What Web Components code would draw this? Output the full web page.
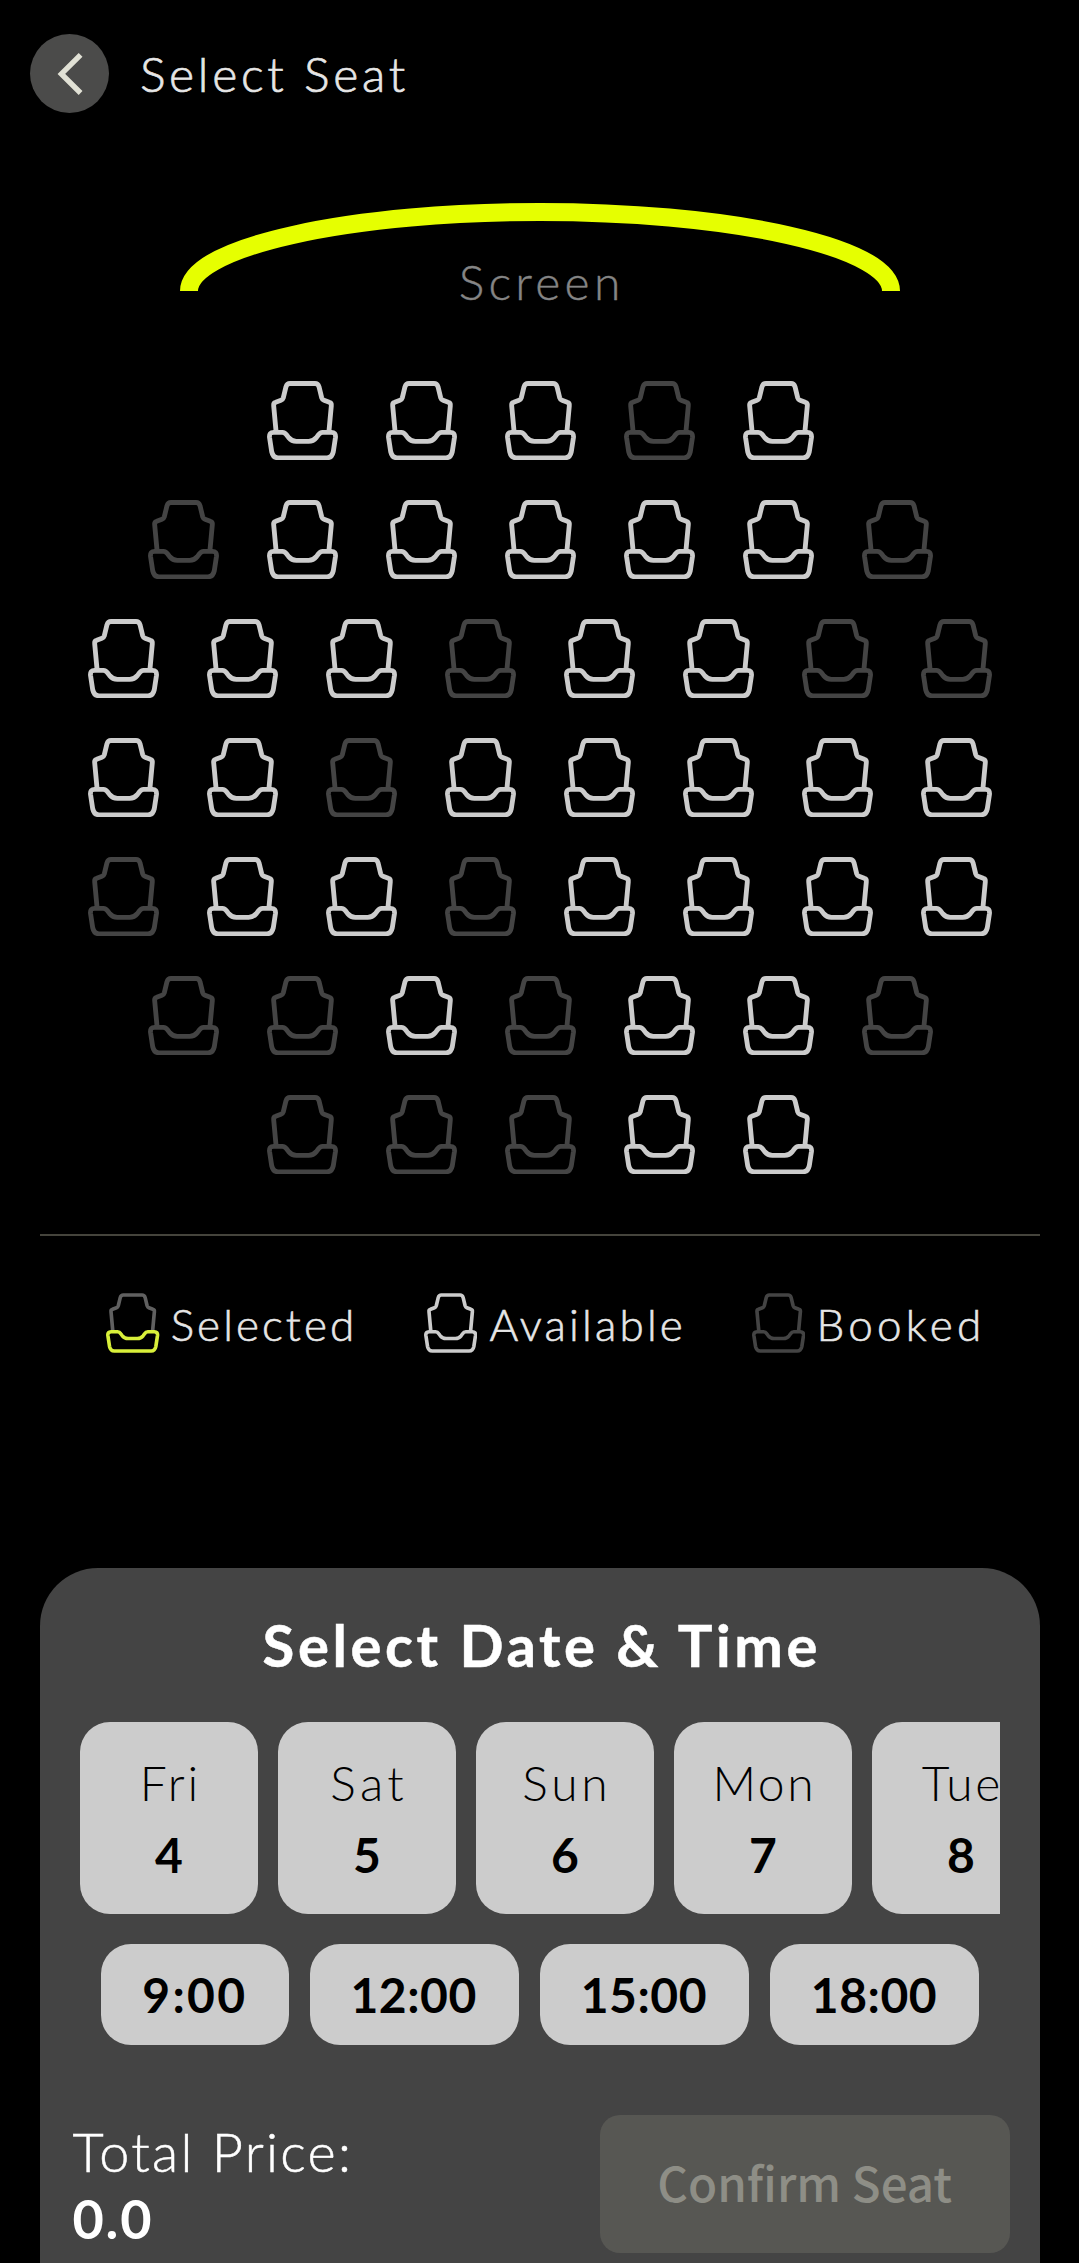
<!DOCTYPE html>
<html lang="en">
<head>
<meta charset="utf-8">
<title>Select Seat</title>
<style>
  html, body { margin: 0; background: #000; }
  body { font-family: Lato, "Open Sans", sans-serif; color: #e6e6e6; }
</style>
</head>
<body>
<seat-screen></seat-screen>

<script>
const define = (name, render) => customElements.define(name, class extends HTMLElement {
  connectedCallback() {
    if (!this.shadowRoot) this.attachShadow({ mode: 'open' }).innerHTML = render(this);
  }
});
const attr = (el, name, fallback = '') => el.getAttribute(name) ?? fallback;

/* Tracked text: the trailing letter gap is cancelled so that it centres on its ink. */
define('tracked-text', el => `
  <style>
    :host { display: block; white-space: nowrap; }
    span { display: block; letter-spacing: ${attr(el, 'track', 0)}px; margin-right: ${-attr(el, 'track', 0)}px; transform: translateY(var(--text-shift, 1px)); }
  </style><span><slot></slot></span>`);

define('back-button', () => `
  <style>
    :host { display: block; width: 79.4px; height: 79.4px; border-radius: 50%; background: #4b4b4a; }
    svg { display: block; width: 100%; height: 100%; }
  </style>
  <svg viewBox="0 0 79.4 79.4"><path d="M50.6 20.8 L31.4 39.9 L50.6 59" fill="none" stroke="#e1e1d5" stroke-width="5.4"/></svg>`);

define('screen-header', () => `
  <style>
    :host { display: flex; align-items: center; gap: 30.6px; height: 79.4px; padding: 33.8px 30px 0; font-weight: 300; font-size: 48px; line-height: 60px; }
    tracked-text { -webkit-text-stroke: .7px currentColor; }
  </style>
  <back-button></back-button><tracked-text track="3.7">Select Seat</tracked-text>`);

define('curved-screen', () => `
  <style>
    :host { display: grid; justify-content: center; height: 177.5px; margin-top: 90.3px; }
    svg, tracked-text { grid-area: 1 / 1; }
    svg { width: 720px; height: 88px; display: block; }
    tracked-text { justify-self: center; padding-top: 48px; font-weight: 300; font-size: 48px; line-height: 60px; color: #858585; -webkit-text-stroke: .4px currentColor; }
  </style>
  <svg viewBox="0 0 720 88"><path d="M9 88 A351 79 0 0 1 711 88" fill="none" stroke="#e6ff00" stroke-width="18"/></svg>
  <tracked-text track="4.3">Screen</tracked-text>`);

/* One seat: backrest outline with the cushion outline over its lower end. */
const SEAT_COLORS = { available: ['#ccc', '#ccc'], booked: ['#444', '#444'], selected: ['#606060', '#d9f03a'] };
define('cinema-seat', el => {
  const [back, cushion] = SEAT_COLORS[attr(el, 'state', 'available')];
  return `
  <style>
    :host { display: block; width: 71px; height: 79.3px; }
    svg { display: block; width: 100%; height: 100%; }
  </style>
  <svg viewBox="0 0 213 238" fill="none" stroke-width="14.5" stroke-linejoin="round" stroke-linecap="round">
    <path stroke="${back}" d="M27 150 L20 74 Q19 66 26 64 L42 58 Q47 56 49 50 L57 17 Q60 7.5 69 7.5 H144 Q153 7.5 156 17 L164 50 Q166 56 171 58 L187 64 Q194 66 193 74 L186 150"/>
    <path stroke="${cushion}" d="M20 154 H46 Q54 154 59 162 L65 170 Q74 181 88 181 H125 Q139 181 148 170 L154 162 Q159 154 167 154 H193 Q207 154 205.5 169 L199 212 Q195 230.5 180 230.5 H33 Q18 230.5 14 212 L7.5 169 Q6 154 20 154 Z"/>
  </svg>`;
});

define('seat-map', el => `
  <style>
    :host { display: flex; flex-direction: column; gap: 39.7px; padding-left: 1.5px; }
    .row { display: flex; justify-content: center; gap: 47.95px; }
  </style>
  ${attr(el, 'rows').split(' ').map(row => `<div class="row">${[...row].map(s =>
    `<cinema-seat state="${s === 'B' ? 'booked' : 'available'}"></cinema-seat>`).join('')}</div>`).join('')}`);

define('legend-item', el => `
  <style>
    :host { display: flex; align-items: center; gap: ${attr(el, 'gap', 11)}px; font-weight: 300; font-size: 44px; line-height: 60px; }
    cinema-seat { width: 53.4px; height: 60px; }
    tracked-text { -webkit-text-stroke: .6px currentColor; }
  </style>
  <cinema-seat state="${attr(el, 'state')}"></cinema-seat>
  <tracked-text track="${attr(el, 'track')}"><slot></slot></tracked-text>`);

define('seat-legend', () => `
  <style>
    :host { display: grid; grid-template-columns: 317.7px 328px auto; margin: 59.7px 39px 0 40px; border-top: 2px solid #45443c; padding: 57px 0 0 66.3px; height: 60px; --text-shift: .5px; }
  </style>
  <legend-item state="selected" track="3.1">Selected</legend-item>
  <legend-item state="available" gap="12" track="3.2">Available</legend-item>
  <legend-item state="booked" gap="11" track="4.3">Booked</legend-item>`);

define('date-card', el => `
  <style>
    :host { flex: none; display: flex; flex-direction: column; align-items: center; justify-content: center; width: 178px; height: 192px; border-radius: 30px; background: #ccc; color: #000; font-size: 48px; line-height: 71.4px; }
    .day { font-weight: 300; }
    .date { font-weight: 700; }
  </style>
  <tracked-text class="day" track="${attr(el, 'track')}">${attr(el, 'day')}</tracked-text>
  <tracked-text class="date">${attr(el, 'date')}</tracked-text>`);

define('time-chip', el => `
  <style>
    :host { display: flex; align-items: center; justify-content: center; box-sizing: border-box; width: ${attr(el, 'width', 209)}px; height: 101px; padding-right: 2px; border-radius: 30px; background: #ccc; color: #000; font-weight: 700; font-size: 48px; line-height: 60px; }
  </style>
  <tracked-text track="${attr(el, 'track', 0.53)}"><slot></slot></tracked-text>`);

define('confirm-button', () => `
  <style>
    :host { display: flex; align-items: center; justify-content: center; width: 410.5px; height: 138.5px; border-radius: 20px; background: #575753; color: #8e8e86; font-family: "Noto Sans CJK SC", "Noto Sans", sans-serif; font-weight: 500; font-size: 47.5px; line-height: 70px; --text-shift: -2px; }
  </style>
  <tracked-text track="0"><slot></slot></tracked-text>`);

define('booking-panel', () => `
  <style>
    :host { display: block; box-sizing: border-box; height: 695px; margin: 215px 39px 0 40px; border-radius: 58px 58px 0 0; background: #444; color: #fff; }
    .title { display: flex; justify-content: center; height: 154px; font-weight: 700; font-size: 58px; line-height: 151px; -webkit-text-stroke: .5px currentColor; }
    .dates { display: flex; gap: 20px; margin: 0 40px; overflow: hidden; }
    .times { display: flex; justify-content: center; gap: 21.2px; margin-top: 30px; }
    .footer { display: flex; justify-content: space-between; margin: 69.7px 30px 0 32.5px; }
    .price { padding-top: 2.8px; font-size: 54px; line-height: 67px; font-weight: 300; }
    .total { -webkit-text-stroke: .5px currentColor; }
    .amount { font-weight: 700; }
  </style>
  <div class="title"><tracked-text track="3.6">Select Date &amp; Time</tracked-text></div>
  <div class="dates">
    <date-card day="Fri" date="4" track="2.86"></date-card>
    <date-card day="Sat" date="5" track="4.3"></date-card>
    <date-card day="Sun" date="6" track="3.8"></date-card>
    <date-card day="Mon" date="7" track="2.6"></date-card>
    <date-card day="Tue" date="8" track="2.5"></date-card>
  </div>
  <div class="times">
    <time-chip width="188" track="2.32">9:00</time-chip>
    <time-chip>12:00</time-chip>
    <time-chip>15:00</time-chip>
    <time-chip>18:00</time-chip>
  </div>
  <div class="footer">
    <div class="price">
      <tracked-text class="total" track="2.3">Total Price:</tracked-text>
      <tracked-text class="amount" track="1.8">0.0</tracked-text>
    </div>
    <confirm-button>Confirm Seat</confirm-button>
  </div>`);

define('seat-screen', () => `
  <style>
    :host { display: flow-root; width: 1079px; height: 2263px; overflow: hidden; background: #000; }
  </style>
  <screen-header></screen-header>
  <curved-screen></curved-screen>
  <seat-map rows="AAABA BAAAAAB AAABAABB AABAAAAA BAABAAAA BBABAAB BBBAA"></seat-map>
  <seat-legend></seat-legend>
  <booking-panel></booking-panel>`);
</script>
</body>
</html>
